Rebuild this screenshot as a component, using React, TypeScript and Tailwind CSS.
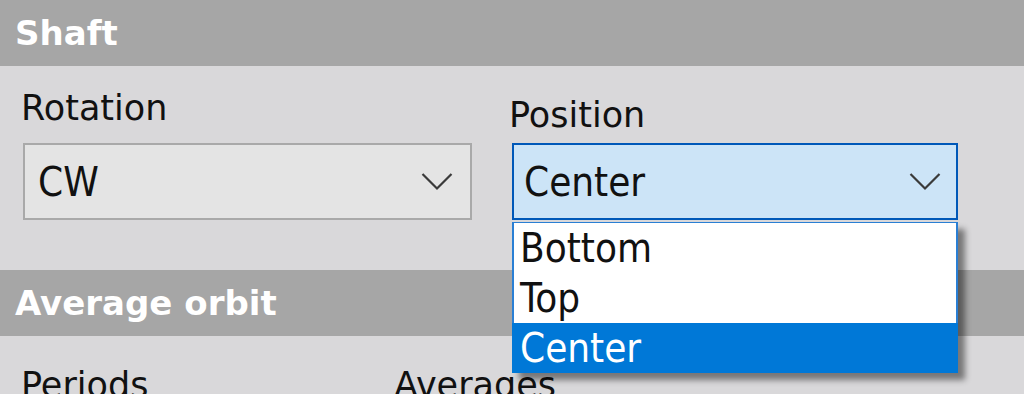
const labelFont = { fontFamily: "'DejaVu Sans', Verdana, sans-serif" };
const boxFont = { fontFamily: "'DejaVu Sans Condensed', 'DejaVu Sans', sans-serif" };

function Chevron() {
  return (
    <svg width="32" height="19" viewBox="0 0 32 19" className="shrink-0">
      <path d="M1.5 2 L16 16.5 L30.5 2" fill="none" stroke="#3a3a3a" strokeWidth="2.2" />
    </svg>
  );
}

function SectionHeader({ title }: { title: string }) {
  return (
    <div className="h-[66px] bg-[#a6a6a6] flex items-center pl-[15px]">
      <span className="text-[34px] font-bold text-white leading-none" style={labelFont}>
        {title}
      </span>
    </div>
  );
}

export default function App() {
  const options = ["Bottom", "Top", "Center"];
  const selected = "Center";

  return (
    <div className="w-[1024px] h-[394px] overflow-hidden bg-[#d9d8da] text-[#111]" style={labelFont}>
      <SectionHeader title="Shaft" />

      <div className="h-[204px] flex gap-[40px] pl-[23px]">
        <div className="w-[449px] pt-[20px]">
          <div className="text-[35px] leading-[44px] -ml-[2px]">Rotation</div>
          <div className="mt-[13px] h-[77px] border-[2px] border-[#a9a9a9] bg-[#e4e4e4] flex items-center justify-between pl-[13px] pr-[17px]">
            <span className="text-[40px] leading-none" style={boxFont}>CW</span>
            <Chevron />
          </div>
        </div>

        <div className="w-[446px] pt-[27px] relative">
          <div className="text-[35px] leading-[44px] -ml-[3px]">Position</div>
          <div className="mt-[6px] h-[77px] border-[2px] border-[#0058b8] bg-[#cce4f7] flex items-center justify-between pl-[10px] pr-[15px]">
            <span className="text-[40px] leading-none" style={boxFont}>Center</span>
            <Chevron />
          </div>
          <div className="absolute left-0 right-0 top-[156px] z-10 bg-white border-x-[2px] border-t-[1px] border-[#2a7fd4] shadow-[7px_7px_6px_rgba(0,0,0,0.45)]" style={boxFont}>
            {options.map((o) => (
              <div
                key={o}
                className={
                  o === selected
                    ? "h-[50px] -mx-[2px] flex items-center pl-[8px] bg-[#0078d7] text-white text-[40px]"
                    : "h-[50px] flex items-center pl-[6px] text-[40px]"
                }
              >
                {o}
              </div>
            ))}
          </div>
        </div>
      </div>

      <SectionHeader title="Average orbit" />

      <div className="flex pl-[21px] pt-[27px]">
        <div className="w-[373px] text-[35px] leading-[44px]">Periods</div>
        <div className="text-[35px] leading-[44px]">Averages</div>
      </div>
    </div>
  );
}
